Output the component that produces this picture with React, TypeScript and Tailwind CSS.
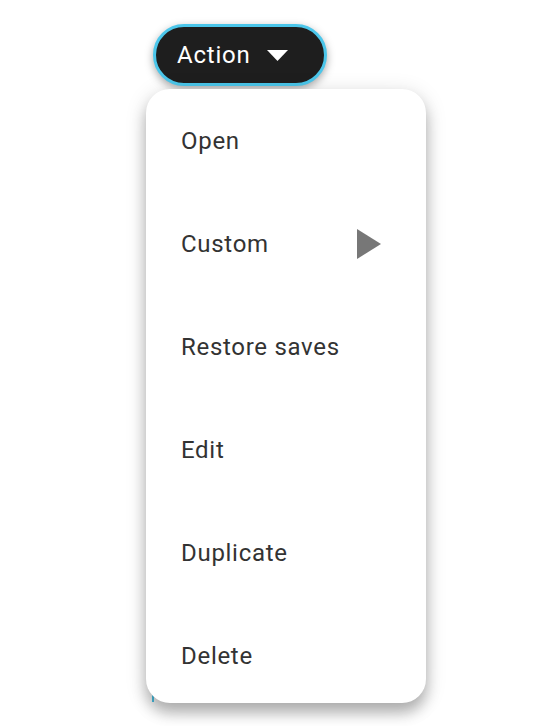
const items = ["Open", "Custom", "Restore saves", "Edit", "Duplicate", "Delete"];

export default function App() {
  return (
    <div
      className="relative w-[556px] h-[726px] bg-white overflow-hidden"
      style={{ fontFamily: "Roboto, 'Liberation Sans', sans-serif" }}
    >
      <div className="pt-[24px] pl-[153px]">
        <button className="flex items-center h-[62px] w-[174px] pl-[21px] rounded-full border-[3px] border-[#4bc6ea] bg-[#1e1e1e] text-white text-[24px] tracking-[0.8px] shadow-[0_3px_8px_rgba(0,0,0,0.35)]">
          <span>Action</span>
          <svg className="ml-[16px]" width="21" height="11" viewBox="0 0 21 11">
            <path d="M0 0 L21 0 L10.5 11 Z" fill="white" />
          </svg>
        </button>
      </div>

      {/* stray focus edge peeking out under the menu */}
      <div className="absolute left-[152px] top-[686px] w-[2px] h-[16px] bg-[#4bc6ea]" />

      <div className="absolute left-[146px] top-[89px] w-[280px] h-[614px] rounded-[24px] bg-white overflow-hidden shadow-[0_10px_14px_rgba(0,0,0,0.25),0_4px_22px_rgba(0,0,0,0.14)]">
        {items.map((label) => (
          <div
            key={label}
            className="flex items-center justify-between h-[103px] pl-[35px] pr-[45px] text-[24px] tracking-[0.7px] text-[#333333]"
          >
            <span>{label}</span>
            {label === "Custom" && (
              <svg width="24" height="30" viewBox="0 0 24 30">
                <path d="M0 0 L24 15 L0 30 Z" fill="#777777" />
              </svg>
            )}
          </div>
        ))}
      </div>
    </div>
  );
}
